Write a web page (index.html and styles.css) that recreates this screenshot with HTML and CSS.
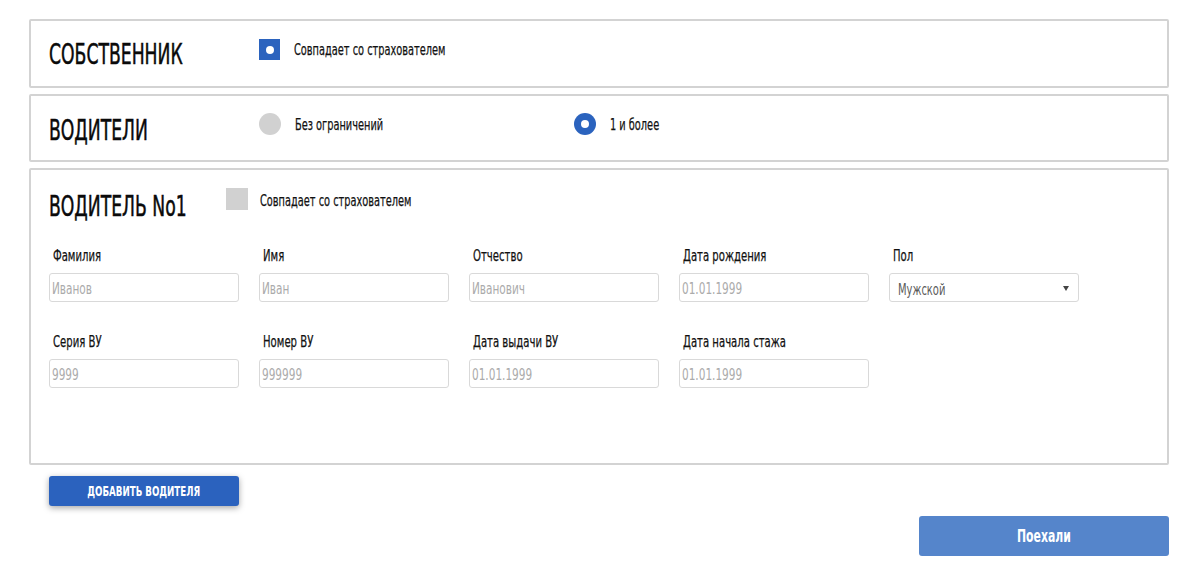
FILE: index.html
```html
<!DOCTYPE html>
<html lang="ru">
<head>
<meta charset="utf-8">
<link rel="stylesheet" href="styles.css">
</head>
<body>
<div class="page">
  <section class="card row-owner">
    <h2 class="title"><span class="t">СОБСТВЕННИК</span></h2>
    <label class="opt">
      <span class="box box-on"><span class="dot"></span></span>
      <span class="opt-text"><span class="t">Совпадает со страхователем</span></span>
    </label>
  </section>

  <section class="card row-drivers">
    <h2 class="title"><span class="t">ВОДИТЕЛИ</span></h2>
    <label class="opt opt-first">
      <span class="box round box-off"></span>
      <span class="opt-text"><span class="t">Без ограничений</span></span>
    </label>
    <label class="opt">
      <span class="box round box-on"><span class="dot"></span></span>
      <span class="opt-text"><span class="t">1 и более</span></span>
    </label>
  </section>

  <section class="card card-driver">
    <div class="driver-head">
      <h2 class="title"><span class="t">ВОДИТЕЛЬ No1</span></h2>
      <label class="opt">
        <span class="box box-off"></span>
        <span class="opt-text"><span class="t">Совпадает со страхователем</span></span>
      </label>
    </div>
    <div class="fields">
      <div class="field"><div class="label"><span class="t">Фамилия</span></div><div class="input"><span class="t">Иванов</span></div></div>
      <div class="field"><div class="label"><span class="t">Имя</span></div><div class="input"><span class="t">Иван</span></div></div>
      <div class="field"><div class="label"><span class="t">Отчество</span></div><div class="input"><span class="t">Иванович</span></div></div>
      <div class="field"><div class="label"><span class="t">Дата рождения</span></div><div class="input"><span class="t">01.01.1999</span></div></div>
      <div class="field"><div class="label"><span class="t">Пол</span></div><div class="input select"><span class="t">Мужской</span><span class="arrow"></span></div></div>
    </div>
    <div class="fields fields-2">
      <div class="field"><div class="label"><span class="t">Серия ВУ</span></div><div class="input"><span class="t">9999</span></div></div>
      <div class="field"><div class="label"><span class="t">Номер ВУ</span></div><div class="input"><span class="t">999999</span></div></div>
      <div class="field"><div class="label"><span class="t">Дата выдачи ВУ</span></div><div class="input"><span class="t">01.01.1999</span></div></div>
      <div class="field"><div class="label"><span class="t">Дата начала стажа</span></div><div class="input"><span class="t">01.01.1999</span></div></div>
    </div>
  </section>

  <div class="add-row"><button class="btn btn-add"><span class="t">ДОБАВИТЬ ВОДИТЕЛЯ</span></button></div>
  <div class="go-row"><button class="btn btn-go"><span class="t">Поехали</span></button></div>
</div>
</body>
</html>
```
FILE: styles.css
```css
* { box-sizing: border-box; }
body {
  margin: 0;
  background: #fff;
  font-family: "DejaVu Sans Condensed", "DejaVu Sans", sans-serif;
  color: #161616;
}
.t {
  display: inline-block;
  white-space: nowrap;
  transform: scaleX(var(--sx, 0.68));
  transform-origin: left center;
}
.page {
  padding: 19px 32px 0 29px;
  width: 1201px;
}
.card {
  border: 2px solid #d3d3d3;
  border-radius: 2px;
  margin-bottom: 6px;
  padding: 0 0 0 18px;
}
.row-owner, .row-drivers {
  height: 68px;
  display: flex;
  align-items: flex-start;
}
.row-owner { height: 69px; }
.title {
  margin: 0;
  font-weight: normal;
  font-size: 29px;
  line-height: 30px;
  color: #0a0a0a;
  width: 210px;
  -webkit-text-stroke: 0.5px #0a0a0a;
  --sx: 0.66;
}
.row-owner .title { margin-top: 18px; }
.row-drivers .title { margin-top: 19px; }
.opt {
  display: flex;
  align-items: center;
}
.row-owner .opt { margin-top: 18px; }
.row-drivers .opt { margin-top: 16px; }
.row-drivers .opt-text { padding-top: 2px; }
.opt-first { width: 315px; flex: none; }
.opt-text {
  font-size: 16.5px;
  line-height: 21px;
  margin-left: 14px;
  color: #111;
  -webkit-text-stroke: 0.25px #111;
  --sx: 0.66;
}
.box {
  width: 21px; height: 21px;
  flex: none;
  display: flex; align-items: center; justify-content: center;
}
.round { width: 22px; height: 22px; border-radius: 50%; }
.box-on { background: #2b63be; }
.box-off { background: #d1d1d1; }
.box .dot { width: 8px; height: 8px; border-radius: 50%; background: #fff; }

.card-driver {
  height: 297px;
  padding-top: 17px;
}
.driver-head {
  display: flex;
  align-items: flex-start;
  height: 40px;
}
.driver-head .title { width: 177px; margin-top: 4px; }
.driver-head .box { width: 22px; height: 22px; }
.driver-head .opt-text { margin-left: 12px; padding-top: 3px; }

.fields {
  display: flex;
  gap: 20px;
  margin-top: 20px;
}
.fields-2 { margin-top: 31px; }
.field { width: 190px; }
.label {
  font-size: 16.5px;
  line-height: 18px;
  padding-left: 4px;
  margin-bottom: 8px;
  color: #111;
  -webkit-text-stroke: 0.25px #111;
  --sx: 0.68;
}
.input {
  height: 29px;
  border: 1px solid #d9d9d9;
  border-radius: 3px;
  font-size: 16px;
  line-height: 18px;
  color: #ababab;
  padding: 2px 0 0 2px;
  display: flex;
  align-items: center;
  --sx: 0.73;
}
.select {
  color: #5a5a5a;
  padding: 5px 0 0 8px;
  justify-content: space-between;
  margin-top: 1px;
  --sx: 0.69;
}
.arrow {
  width: 0; height: 0;
  border-left: 3px solid transparent;
  border-right: 3px solid transparent;
  border-top: 5px solid #444;
  margin: -3px 9px 0 0;
}

.add-row { padding-left: 20px; margin-top: 11px; }
.btn {
  border: none;
  border-radius: 3px;
  color: #fff;
  font-family: inherit;
  font-weight: bold;
  padding: 0;
}
.btn .t { transform-origin: center center; }
.btn-add {
  width: 190px; height: 30px;
  background: #2b62be;
  font-size: 14px;
  box-shadow: 0 2px 6px rgba(0,0,0,0.35);
  --sx: 0.69;
}
.go-row { display: flex; justify-content: flex-end; margin-top: 10px; }
.btn-go {
  width: 250px; height: 40px;
  background: #5585cb;
  font-size: 17px;
  --sx: 0.71;
}
```
